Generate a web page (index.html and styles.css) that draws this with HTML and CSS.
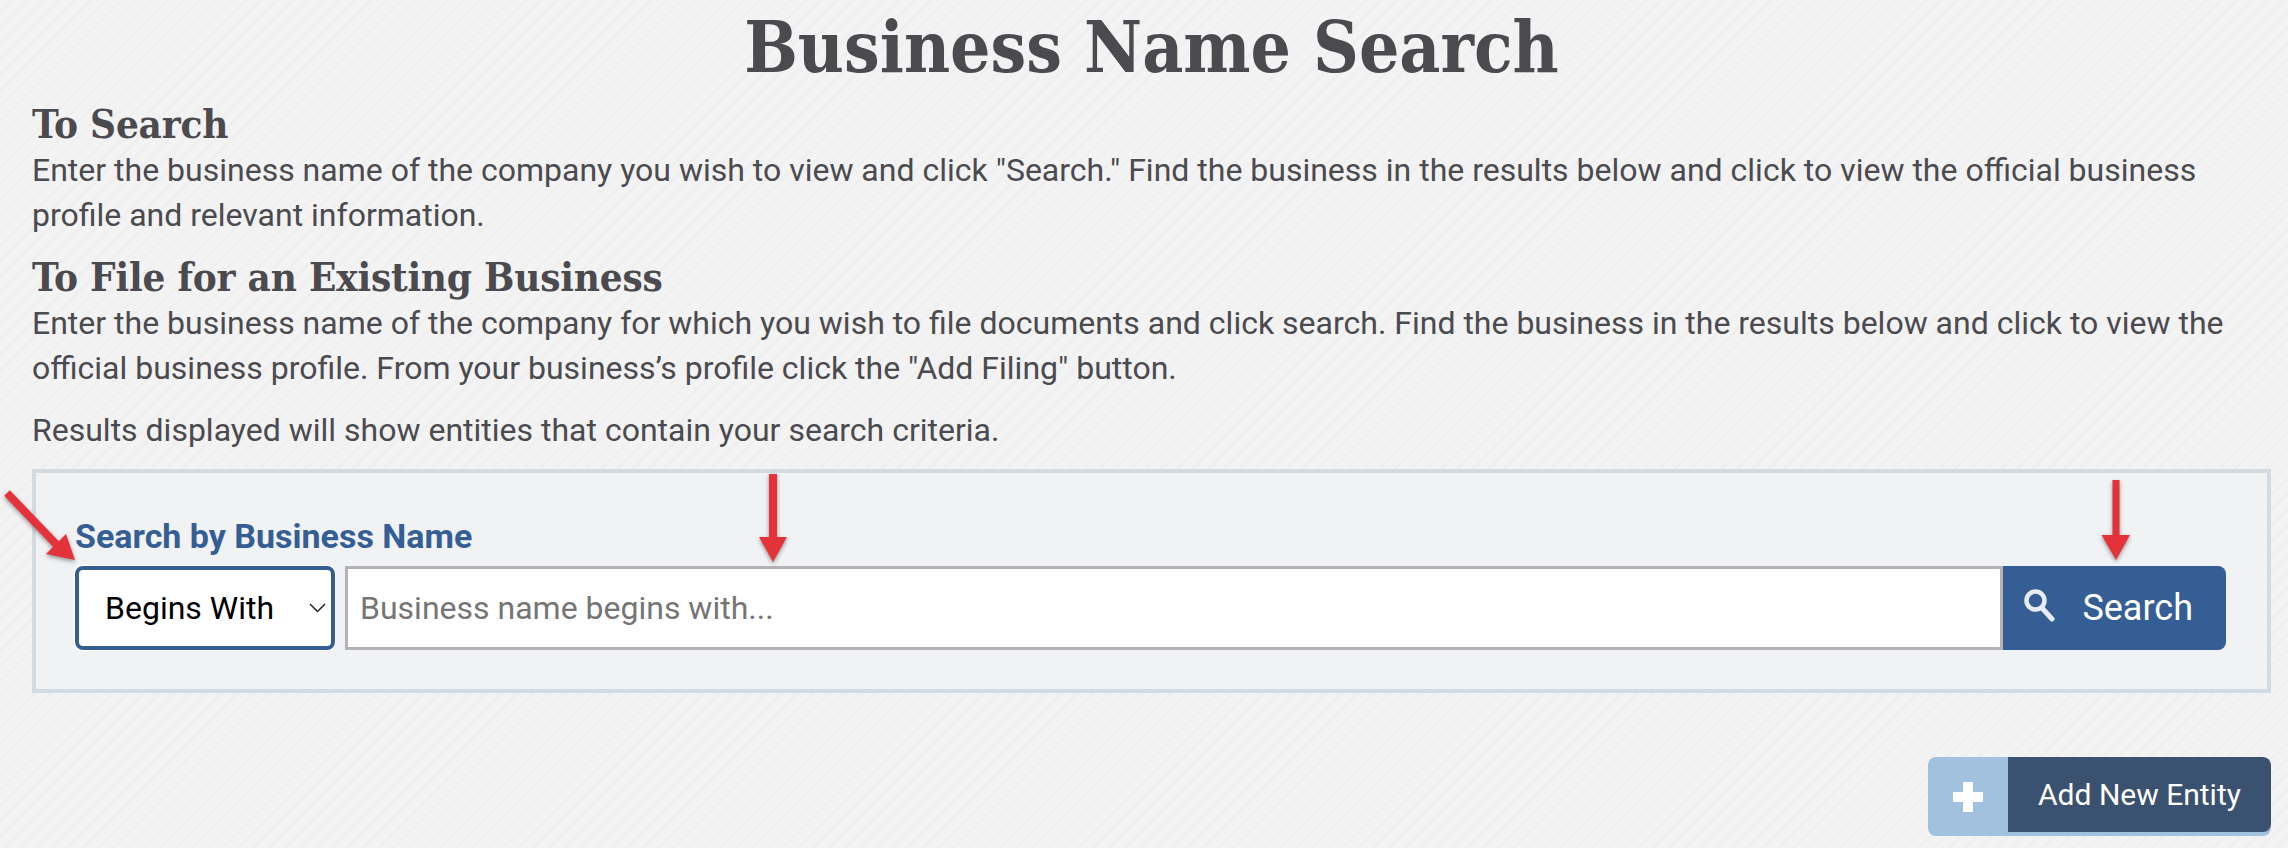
FILE: index.html
```html
<!DOCTYPE html>
<html lang="en">
<head>
    <meta charset="UTF-8">
    <meta name="viewport" content="width=device-width, initial-scale=1.0">
    <title>Business Name Search</title>
    <link rel="stylesheet" href="styles.css">
</head>
<body>
    <div class="container">
        <h1>Business Name Search</h1>

        <h2>To Search</h2>
        <p>Enter the business name of the company you wish to view and click "Search." Find the business in the results below and click to view the official business profile and relevant information.</p>

        <h2 class="second-heading">To File for an Existing Business</h2>
        <p>Enter the business name of the company for which you wish to file documents and click search. Find the business in the results below and click to view the official business profile. From your business’s profile click the "Add Filing" button.</p>

        <p class="results-note">Results displayed will show entities that contain your search criteria.</p>

        <!-- Search panel -->
        <div class="search-panel">
            <label class="search-label" for="business-name">Search by Business Name</label>
            <div class="search-row">
                <div class="select-box">
                    <span>Begins With</span>
                    <svg class="chevron" viewBox="0 0 17 10" width="17" height="10"><path d="M1 1l7.500 7.500 7.500-7.500" fill="none" stroke="#222" stroke-width="1.500"/></svg>
                </div>
                <input class="search-input" type="text" id="business-name" placeholder="Business name begins with...">
                <button class="btn-search">
                    <svg class="search-icon" viewBox="0 0 32 34" width="32" height="34"><circle cx="12.500" cy="12.500" r="9" fill="none" stroke="#e6edf5" stroke-width="4.500"/><path d="M19 20l10 11" stroke="#e6edf5" stroke-width="5" stroke-linecap="round"/></svg>
                    <span>Search</span>
                </button>
            </div>
        </div>

        <div class="actions">
            <button class="btn-add">
                <span class="btn-add-icon"><svg viewBox="0 0 32 32" width="32" height="32"><path d="M16 1v30M1 16h30" stroke="#fff" stroke-width="10"/></svg></span>
                <span class="btn-add-text">Add New Entity</span>
            </button>
        </div>
    </div>

    <!-- Red annotation arrows drawn over the page -->
    <svg class="arrows" viewBox="0 0 2288 848" width="2288" height="848">
        <path d="M4.200 495.800L9.800 490.200L58.800 541.200L66 534L75 560L46 554L53.200 546.800z" fill="#e4323a"/>
        <path d="M769 474h8v63h10l-14 25-14-25h10z" fill="#e4323a"/>
        <path d="M2112.500 480h7v55h10.500l-14 25-14.500-25h11z" fill="#e4323a"/>
    </svg>
</body>
</html>
```

FILE: styles.css
```css
/* Page */
body {
    margin: 0;
    height: 848px;
    overflow: hidden;
    font-family: Roboto, sans-serif;
    color: #4a4a4f;
    background-color: #f3f3f3;
    background-image: repeating-linear-gradient(135deg, #f3f3f3 0, #f3f3f3 7px, #eeeeee 9px, #f3f3f3 11px);
}
.container { padding: 0 17px 0 32px; position: relative; }

/* Headings and copy */
h1 {
    margin: 0 0 3px;
    text-align: center;
    font-family: "DejaVu Serif Condensed", "DejaVu Serif", serif;
    font-size: 70.600px;
    font-weight: 700;
    line-height: 96px;
}
h2 {
    margin: 0;
    font-family: "DejaVu Serif Condensed", "DejaVu Serif", serif;
    font-size: 40px;
    font-weight: 700;
    letter-spacing: -0.2px;
    line-height: 49px;
}
.second-heading { margin-top: 14px; }
p { margin: 0; font-size: 32px; line-height: 45px; }
.results-note { margin-top: 17px; }

/* Search panel */
.search-panel {
    box-sizing: border-box;
    height: 224px;
    margin-top: 16px;
    padding: 40px 41px 0 39px;
    background-color: #f1f2f4;
    border: 4px solid #d3dbe2;
}
.search-label { display: block; margin-bottom: 7px; font-size: 34px; font-weight: 700; line-height: 46px; color: #355f94; }
.search-row { display: flex; height: 84px; }

.select-box {
    box-sizing: border-box;
    width: 260px;
    margin-right: 10px;
    padding: 0 5px 0 26px;
    display: flex;
    align-items: center;
    justify-content: space-between;
    font-size: 32px;
    color: #000;
    background-color: #fff;
    border: 4px solid #355f94;
    border-radius: 8px;
    box-shadow: 0 0 0 1px #fff;
}
.search-input {
    box-sizing: border-box;
    flex: 1;
    padding: 0 12px;
    font-family: Roboto, sans-serif;
    font-size: 32px;
    background-color: #fff;
    border: 3px solid #b2b2b6;
    outline: none;
}
.search-input::placeholder { color: #757575; }

.btn-search {
    box-sizing: border-box;
    width: 223px;
    padding: 0 33px 0 20px;
    display: flex;
    align-items: center;
    justify-content: space-between;
    font-family: Roboto, sans-serif;
    font-size: 36px;
    color: #fff;
    background-color: #355f94;
    border: none;
    border-radius: 0 8px 8px 0;
}
.search-icon { margin-top: -6px; }

/* Add button */
.actions { display: flex; justify-content: flex-end; margin-top: 64px; }
.btn-add {
    display: flex;
    width: 343px;
    height: 79px;
    padding: 0 0 4px;
    box-sizing: border-box;
    font-family: Roboto, sans-serif;
    font-size: 30px;
    color: #fff;
    background-color: #a2c1df;
    border: none;
    border-radius: 8px;
    overflow: hidden;
}
.btn-add-icon { width: 80px; display: flex; align-items: center; justify-content: center; padding-top: 4px; }
.btn-add-text {
    flex: 1;
    display: flex;
    align-items: center;
    justify-content: center;
    background-color: #3b5170;
    border-radius: 0 8px 8px 0;
}

/* Annotation arrows */
.arrows { position: absolute; top: 0; left: 0; filter: drop-shadow(0 2px 2px rgba(0, 0, 0, 0.4)); }
```
